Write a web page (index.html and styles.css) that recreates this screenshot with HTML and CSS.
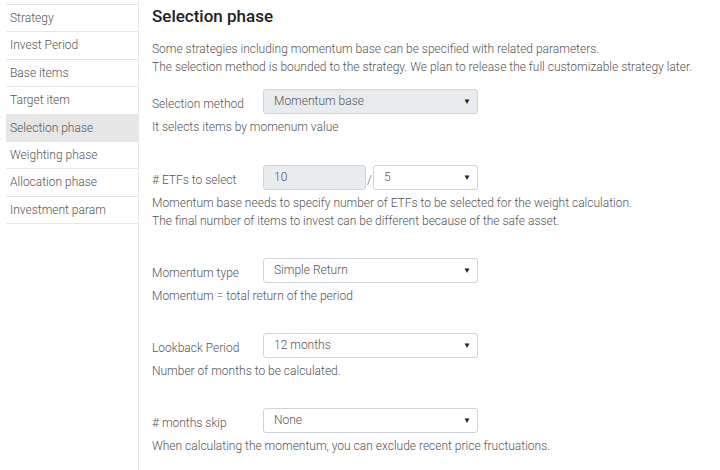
FILE: index.html
```html
<!DOCTYPE html>
<html>
<head>
<meta charset="utf-8">
<link rel="stylesheet" href="styles.css">
</head>
<body>
<div class="page">
  <aside class="side">
    <ul class="nav">
      <li>Strategy</li>
      <li>Invest Period</li>
      <li>Base items</li>
      <li>Target item</li>
      <li class="active">Selection phase</li>
      <li>Weighting phase</li>
      <li>Allocation phase</li>
      <li>Investment param</li>
    </ul>
  </aside>
  <main class="main">
    <h1 class="title">Selection phase</h1>
    <p class="intro">Some strategies including momentum base can be specified with related parameters.<br>The selection method is bounded to the strategy. We plan to release the full customizable strategy later.</p>

    <div class="group first">
      <div class="row">
        <span class="label">Selection method</span>
        <div class="select disabled wide"><span>Momentum base</span><span class="caret">▼</span></div>
      </div>
      <p class="help">It selects items by momenum value</p>
    </div>

    <div class="group g2">
      <div class="row">
        <span class="label"># ETFs to select</span>
        <div class="input disabled">10</div>
        <span class="slash">/</span>
        <div class="select small"><span>5</span><span class="caret">▼</span></div>
      </div>
      <p class="help">Momentum base needs to specify number of ETFs to be selected for the weight calculation.<br>The final number of items to invest can be different because of the safe asset.</p>
    </div>

    <div class="group g3">
      <div class="row">
        <span class="label">Momentum type</span>
        <div class="select wide"><span>Simple Return</span><span class="caret">▼</span></div>
      </div>
      <p class="help">Momentum = total return of the period</p>
    </div>

    <div class="group g4">
      <div class="row">
        <span class="label">Lookback Period</span>
        <div class="select wide"><span>12 months</span><span class="caret">▼</span></div>
      </div>
      <p class="help">Number of months to be calculated.</p>
    </div>

    <div class="group g4">
      <div class="row">
        <span class="label"># months skip</span>
        <div class="select wide"><span>None</span><span class="caret">▼</span></div>
      </div>
      <p class="help">When calculating the momentum, you can exclude recent price fructuations.</p>
    </div>
  </main>
</div>
</body>
</html>
```
FILE: styles.css
```css
html, body {
  margin: 0;
  padding: 0;
  background: #fff;
}
body {
  font-family: Roboto, "Liberation Sans", sans-serif;
  font-size: 12px;
  font-weight: 300;
  color: #555;
  width: 720px;
  height: 470px;
  overflow: hidden;
}
.page {
  display: flex;
  height: 470px;
}
.side {
  width: 138px;
  border-right: 1px solid #e8e8e8;
  flex: none;
}
.nav {
  list-style: none;
  margin: 4px 0 0 6px;
  padding: 0;
  border-top: 1px solid #e6e6e6;
}
.nav li {
  height: 26.4px;
  line-height: 26px;
  padding-left: 4px;
  border-bottom: 1px solid #e6e6e6;
  color: #555;
  font-size: 12px;
}
.nav li.active {
  background: #e6e6e6;
}
.main {
  padding-left: 13px;
  flex: 1;
}
.title {
  margin: 5px 0 0 0;
  font-size: 17px;
  font-weight: 500;
  color: #222;
  line-height: 22px;
}
.intro {
  margin: 13px 0 0 0;
  line-height: 18px;
  font-size: 12px;
}
.group {
  margin: 0;
}
.group.first {
  margin-top: 13px;
}
.group.g2 {
  margin-top: 29px;
}
.group.g3 {
  margin-top: 28px;
}
.group.g4 {
  margin-top: 28px;
}
.row {
  display: flex;
  align-items: center;
  height: 25px;
}
.label {
  width: 111px;
  flex: none;
  position: relative;
  top: 2px;
}
.select, .input {
  box-sizing: border-box;
  height: 25px;
  border: 1px solid #ced4da;
  border-radius: 3px;
  display: flex;
  align-items: center;
  justify-content: space-between;
  padding: 0 6px 2px 10px;
  color: #555;
  background: #fff;
}
.disabled {
  background: #e9ecef;
}
.wide {
  width: 215px;
}
.input {
  width: 103px;
}
.small {
  width: 105px;
}
.slash {
  width: 7px;
  text-align: center;
  color: #666;
  position: relative;
  top: 2px;
}
.caret {
  font-size: 8px;
  color: #222;
  font-family: "DejaVu Sans", sans-serif;
  padding-top: 2px;
}
.help {
  margin: 0;
  line-height: 18px;
  padding-top: 4px;
}
```
